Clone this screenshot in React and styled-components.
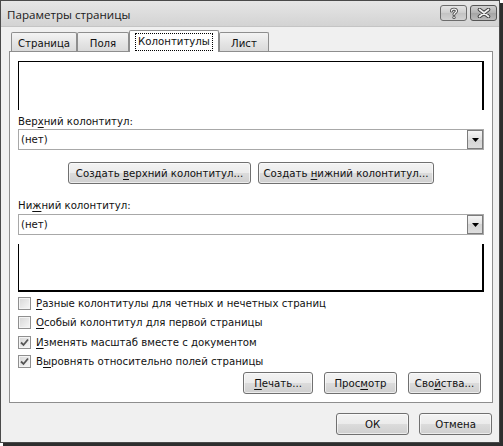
import React from 'react';
import styled, { createGlobalStyle } from 'styled-components';

const GlobalStyle = createGlobalStyle`
  html, body { margin: 0; padding: 0; background: #ffffff; }
  body {
    font-family: "DejaVu Sans Condensed", "DejaVu Sans", sans-serif;
    font-size: 11.3px;
    color: #000;
  }
  #root { width: 503px; height: 446px; }
  u { text-decoration-thickness: 1px; text-underline-offset: 2px; }
`;

const Window = styled.div`
  width: 500px;
  height: 443px;
  box-sizing: border-box;
  border: 1px solid #4a4a4a;
  background: #f0f0f0;
  box-shadow: 3px 3px 0 #2e2e2e;
  display: flex;
  flex-direction: column;
`;

const TitleBar = styled.div`
  height: 26px;
  flex: none;
  display: flex;
  align-items: center;
  padding: 0 2px 0 6px;
  background: linear-gradient(#e6e6e6, #d3d3d3);
  border-bottom: 1px solid #c4c4c4;
  box-sizing: border-box;
`;

const Title = styled.div`
  flex: 1;
  font-family: "Open Sans", "DejaVu Sans", sans-serif;
  font-size: 11.6px;
  color: #1a1a1a;
  padding-top: 1px;
`;

const CaptionButtons = styled.div`
  display: flex;
  gap: 3px;
  align-self: flex-start;
  margin-top: 4px;
`;

const CaptionButton = styled.div`
  width: 27px;
  height: 16px;
  box-sizing: border-box;
  border: 1px solid ${p => (p.$close ? '#555' : '#6c6c6c')};
  border-radius: 3px;
  background: ${p =>
    p.$close
      ? 'linear-gradient(#cfcfcf, #b2b2b2 50%, #a4a4a4 50%, #bababa)'
      : 'linear-gradient(#e4e4e4, #cdcdcd 50%, #c2c2c2 50%, #d2d2d2)'};
  display: flex;
  align-items: center;
  justify-content: center;
`;

const Client = styled.div`
  flex: 1;
  display: flex;
  flex-direction: column;
  padding: 3px 6px 0 8px;
`;

const TabStrip = styled.div`
  display: flex;
  align-items: flex-end;
  height: 21px;
  padding-left: 2px;
  position: relative;
  z-index: 1;
`;

const Tab = styled.div`
  width: ${p => p.$w}px;
  box-sizing: border-box;
  height: ${p => (p.$active ? 22 : 19)}px;
  margin-bottom: ${p => (p.$active ? -1 : 0)}px;
  border: 1px solid #8e8e8e;
  border-bottom: none;
  border-radius: 2px 2px 0 0;
  background: ${p => (p.$active ? '#ffffff' : 'linear-gradient(#f4f4f4, #e6e6e6 50%, #dadada)')};
  display: flex;
  justify-content: center;
  align-items: flex-start;
  padding-top: 3px;
  color: #111;
`;

const FocusLabel = styled.span`
  outline: 1px dotted #000;
  outline-offset: 0;
  padding: 1px 2px 2px;
  line-height: 13px;
`;

const TabLabel = styled.span`
  line-height: 15px;
`;

const Panel = styled.div`
  border: 1px solid #8e8e8e;
  background: #ffffff;
  padding: 9px 8px 8px 8px;
  display: flex;
  flex-direction: column;
`;

const HeaderPreview = styled.div`
  height: 49px;
  box-sizing: border-box;
  border-top: 1px solid #000;
  border-left: 1px solid #000;
  border-right: 2px solid #000;
`;

const FooterPreview = styled.div`
  height: 48px;
  margin-top: 9px;
  box-sizing: border-box;
  border-left: 1px solid #000;
  border-right: 2px solid #000;
  border-bottom: 2px solid #000;
`;

const Label = styled.div`
  margin-top: ${p => p.$mt}px;
  line-height: 13px;
  height: 13px;
  color: #111;
`;

const Select = styled.div`
  margin-top: ${p => p.$mt}px;
  height: 21px;
  box-sizing: border-box;
  border: 1px solid #a8a8a8;
  display: flex;
  align-items: center;
  padding: 0 0 0 2px;
  color: #111;
`;

const SelectValue = styled.span`
  flex: 1;
`;

const DropButton = styled.div`
  width: 16px;
  height: 19px;
  box-sizing: border-box;
  border: 1px solid #7c7c7c;
  background: linear-gradient(#f5f5f5, #e2e2e2 50%, #d4d4d4 50%, #dddddd);
  display: flex;
  align-items: center;
  justify-content: center;
`;

const ButtonRow = styled.div`
  display: flex;
  justify-content: ${p => p.$justify || 'center'};
  gap: ${p => p.$gap}px;
  margin-top: ${p => p.$mt}px;
  padding-right: ${p => p.$pr || 0}px;
`;

const Button = styled.div`
  width: ${p => p.$w}px;
  height: 22px;
  box-sizing: border-box;
  border: 1px solid #707070;
  border-radius: 3px;
  background: linear-gradient(#f3f3f3, #ebebeb 50%, #dcdcdc 50%, #cfcfcf);
  box-shadow: inset 0 0 0 1px rgba(255, 255, 255, 0.6);
  display: flex;
  align-items: center;
  justify-content: center;
  color: #111;
  white-space: nowrap;
`;

const Checks = styled.div`
  margin-top: 2px;
  display: flex;
  flex-direction: column;
`;

const CheckRow = styled.div`
  height: 19.3px;
  display: flex;
  align-items: center;
  gap: 5px;
  color: #111;
`;

const Box = styled.div`
  width: 13px;
  height: 13px;
  box-sizing: border-box;
  border: 1px solid #8f8f8f;
  background: linear-gradient(135deg, #d6d6d6, #f7f7f7);
  box-shadow: inset 0 0 0 1px #f4f4f4;
  display: flex;
  align-items: center;
  justify-content: center;
`;

const Check = ({ checked, children }) => (
  <CheckRow>
    <Box>
      {checked && (
        <svg width="9" height="9" viewBox="0 0 9 9">
          <path d="M1 4.5 L3.5 7 L8 1.5" fill="none" stroke="#555" strokeWidth="1.8" />
        </svg>
      )}
    </Box>
    <span>{children}</span>
  </CheckRow>
);

const HelpGlyph = () => (
  <svg width="12" height="12" viewBox="0 0 12 12">
    <path d="M3.5 4 C3.5 1.5 8.5 1.5 8.5 4 C8.5 5.8 6 5.8 6 7.6" fill="none" stroke="#4a4a4a" strokeWidth="3" strokeLinecap="round" />
    <circle cx="6" cy="10.4" r="1.6" fill="#4a4a4a" />
    <path d="M3.5 4 C3.5 1.5 8.5 1.5 8.5 4 C8.5 5.8 6 5.8 6 7.6" fill="none" stroke="#f4f4f4" strokeWidth="1.3" strokeLinecap="round" />
    <circle cx="6" cy="10.4" r="0.8" fill="#f4f4f4" />
  </svg>
);

const CloseGlyph = () => (
  <svg width="14" height="10" viewBox="0 0 14 10">
    <path d="M2.5 1.5 L11.5 8.5 M11.5 1.5 L2.5 8.5" stroke="#3c3c3c" strokeWidth="3.6" strokeLinecap="round" />
    <path d="M2.5 1.5 L11.5 8.5 M11.5 1.5 L2.5 8.5" stroke="#f2f2f2" strokeWidth="1.8" strokeLinecap="round" />
  </svg>
);

const Arrow = () => (
  <svg width="7" height="4" viewBox="0 0 7 4">
    <path d="M0 0 H7 L3.5 4 Z" fill="#000" />
  </svg>
);

export default function App() {
  return (
    <>
      <GlobalStyle />
      <Window>
        <TitleBar>
          <Title>Параметры страницы</Title>
          <CaptionButtons>
            <CaptionButton><HelpGlyph /></CaptionButton>
            <CaptionButton $close><CloseGlyph /></CaptionButton>
          </CaptionButtons>
        </TitleBar>
        <Client>
          <TabStrip>
            <Tab $w={66}><TabLabel>Страница</TabLabel></Tab>
            <Tab $w={52}><TabLabel>Поля</TabLabel></Tab>
            <Tab $w={90} $active><FocusLabel>Колонтитулы</FocusLabel></Tab>
            <Tab $w={50}><TabLabel>Лист</TabLabel></Tab>
          </TabStrip>
          <Panel>
            <HeaderPreview />
            <Label $mt={5}>Вер<u>х</u>ний колонтитул:</Label>
            <Select $mt={1}>
              <SelectValue>(нет)</SelectValue>
              <DropButton><Arrow /></DropButton>
            </Select>
            <ButtonRow $gap={7} $mt={12}>
              <Button $w={183}><span>Создать <u>в</u>ерхний колонтитул...</span></Button>
              <Button $w={176}><span>Создать <u>н</u>ижний колонтитул...</span></Button>
            </ButtonRow>
            <Label $mt={15}>Ни<u>ж</u>ний колонтитул:</Label>
            <Select $mt={2}>
              <SelectValue>(нет)</SelectValue>
              <DropButton><Arrow /></DropButton>
            </Select>
            <FooterPreview />
            <Checks>
              <Check><u>Р</u>азные колонтитулы для четных и нечетных страниц</Check>
              <Check><u>О</u>собый колонтитул для первой страницы</Check>
              <Check checked><u>И</u>зменять масштаб вместе с документом</Check>
              <Check checked>В<u>ы</u>ровнять относительно полей страницы</Check>
            </Checks>
            <ButtonRow $justify="flex-end" $gap={11} $mt={1} $pr={3}>
              <Button $w={70}><span><u>П</u>ечать...</span></Button>
              <Button $w={73}><span>Прос<u>м</u>отр</span></Button>
              <Button $w={73}><span>Сво<u>й</u>ства...</span></Button>
            </ButtonRow>
          </Panel>
          <ButtonRow $justify="flex-end" $gap={10} $mt={10} $pr={1}>
            <Button $w={73}><span>ОК</span></Button>
            <Button $w={73}><span>Отмена</span></Button>
          </ButtonRow>
        </Client>
      </Window>
    </>
  );
}
